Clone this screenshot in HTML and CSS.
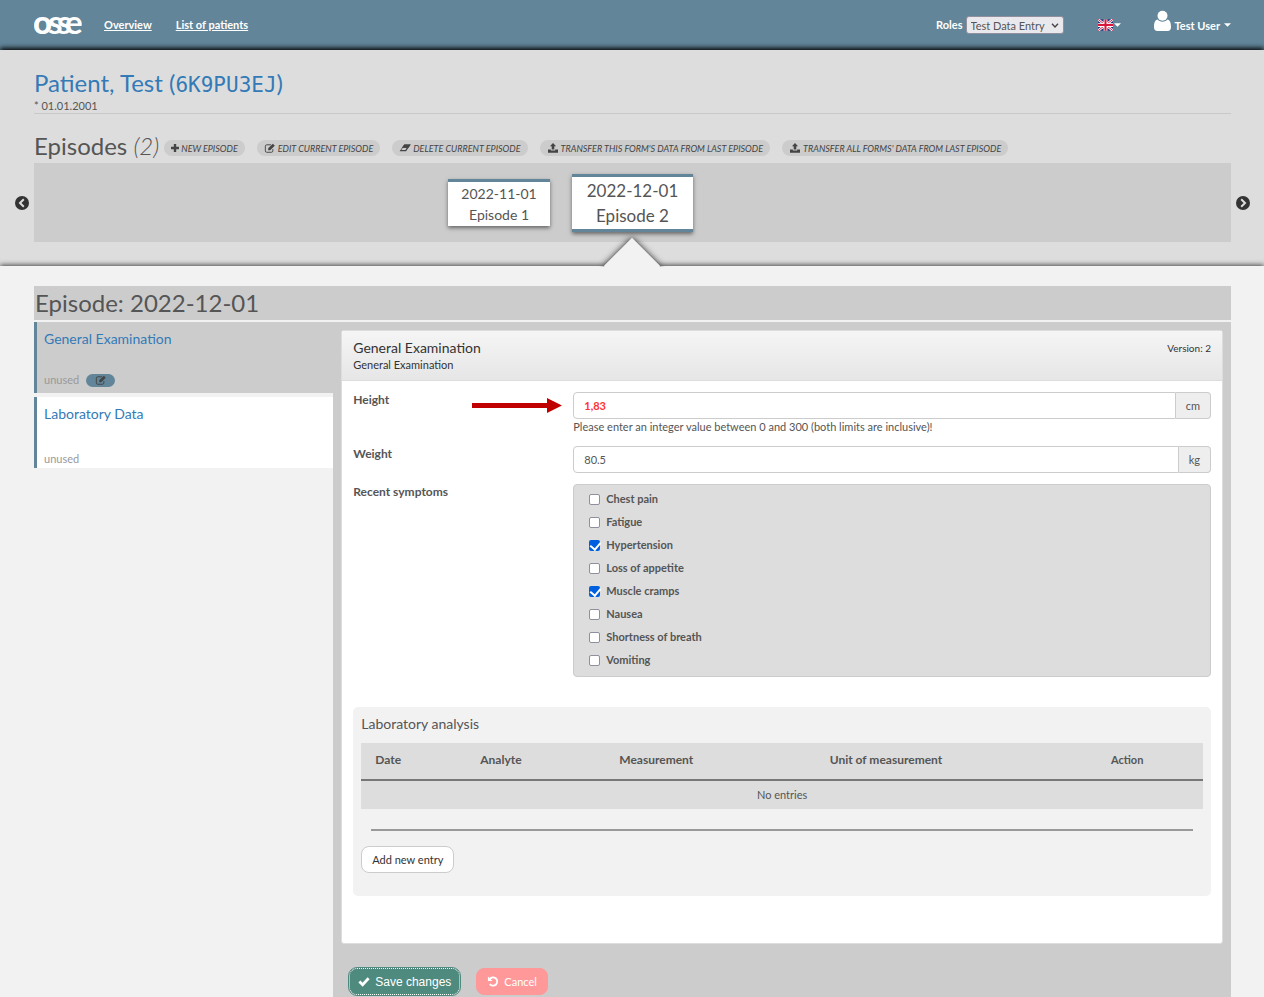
FILE: index.html
```
<!DOCTYPE html>
<html lang="en">
<head>
  <meta charset="UTF-8">
  <meta name="viewport" content="width=device-width, initial-scale=1.0">
  <title>OSSE - General Examination</title>
  <link rel="stylesheet" href="styles.css">
</head>
<body>
  <!-- shared icons -->
  <svg class="sprite" aria-hidden="true">
    <symbol id="icon-edit" viewBox="0 0 16 14">
      <path d="M12 8.500V11a2 2 0 0 1-2 2H3.500a2 2 0 0 1-2-2V4.500a2 2 0 0 1 2-2H9.500" fill="none" stroke="currentColor" stroke-width="1.300"/>
      <path d="M5.500 7.500 12 1l2.700 2.700L8.200 10.200H5.500z" fill="currentColor"/>
    </symbol>
    <symbol id="icon-upload" viewBox="0 0 14 14">
      <path d="M7 0l4.300 4.600H8.800V9H5.200V4.600H2.700zM0 9h4v1.500h6V9h4v4.500H0z" fill="currentColor"/>
    </symbol>
    <symbol id="icon-caret" viewBox="0 0 8 4">
      <path d="M0 0h8L4 4z" fill="currentColor"/>
    </symbol>
  </svg>

  <header class="navbar">
    <svg class="logo" viewBox="0 0 48 48" role="img" aria-label="osse">
      <text y="33" font-size="33"><tspan x="-1" font-weight="900">o</tspan><tspan x="14" font-weight="700">s</tspan><tspan x="23" font-weight="700">s</tspan><tspan x="31">e</tspan></text>
    </svg>
    <nav class="nav-links">
      <a href="#">Overview</a>
      <a href="#">List of patients</a>
    </nav>
    <div class="roles">
      <label for="role">Roles</label>
      <span class="select-wrap">
        <select id="role">
          <option>Test Data Entry</option>
        </select>
        <svg class="chevron" viewBox="0 0 8 5"><path d="M1 .7 4 4 7 .7" fill="none" stroke="#444" stroke-width="1.300"/></svg>
      </span>
    </div>
    <button type="button" class="nav-btn language" aria-label="Language">
      <svg class="flag" viewBox="0 0 16 12">
        <path d="M0 0h16v12H0z" fill="#1c2f7c"/>
        <path d="M0 0l16 12M16 0L0 12" stroke="#fff" stroke-width="2.600"/>
        <path d="M0 0l16 12M16 0L0 12" stroke="#d8173a" stroke-width="1"/>
        <path d="M8 0v12M0 6h16" stroke="#fff" stroke-width="4"/>
        <path d="M8 0v12M0 6h16" stroke="#d8173a" stroke-width="2.200"/>
      </svg>
      <svg class="caret"><use href="#icon-caret"/></svg>
    </button>
    <button type="button" class="nav-btn user">
      <svg class="user-icon" viewBox="0 0 18 22">
        <path d="M3.800 9.500C1.200 9.800 0 13 0 17.500 0 20 1.300 21.500 3.500 21.500h11c2.200 0 3.500-1.500 3.500-4 0-4.500-1.200-7.700-3.800-8C13 11 11.200 11.700 9 11.700S5 11 3.800 9.500z" fill="#fff"/>
        <circle cx="9" cy="5.500" r="5.300" fill="#fff"/>
      </svg>
      <span>Test User</span>
      <svg class="caret"><use href="#icon-caret"/></svg>
    </button>
  </header>

  <section class="patient">
    <div class="patient-info">
      <h1><a href="#">Patient, Test (<span class="patient-id">6K9PU3EJ</span>)</a></h1>
      <p>* 01.01.2001</p>
    </div>
    <div class="episodes-head">
      <h2>Episodes <em>(2)</em></h2>
      <button type="button" class="pill">
        <svg class="icon-sm" viewBox="0 0 10 10"><path d="M3.500 0h3v3.500H10v3H6.500V10h-3V6.500H0v-3h3.500z" fill="currentColor"/></svg>New episode
      </button>
      <button type="button" class="pill"><svg class="icon"><use href="#icon-edit"/></svg>Edit current episode</button>
      <button type="button" class="pill">
        <svg class="icon" viewBox="0 0 16 14"><path d="M7 2h9l-6.500 9.500H.5zM2.800 9.800h5.700l2-3.100H5z" fill="currentColor" fill-rule="evenodd"/><path d="M7 2h9l-3.300 4.800H3.600z" fill="currentColor"/></svg>Delete current episode
      </button>
      <button type="button" class="pill"><svg class="icon"><use href="#icon-upload"/></svg>Transfer this form's data from last episode</button>
      <button type="button" class="pill"><svg class="icon"><use href="#icon-upload"/></svg>Transfer all forms' data from last episode</button>
    </div>
    <div class="timeline-row">
      <button type="button" class="arrow-btn" aria-label="Previous">
        <svg viewBox="0 0 14 14"><circle cx="7" cy="7" r="7" fill="#333"/><path d="M8.800 3.300 5 7l3.800 3.700" fill="none" stroke="#ddd" stroke-width="2"/></svg>
      </button>
      <div class="timeline">
        <a href="#" class="tile">2022-11-01<br>Episode 1</a>
        <a href="#" class="tile active">2022-12-01<br>Episode 2</a>
      </div>
      <button type="button" class="arrow-btn next" aria-label="Next">
        <svg viewBox="0 0 14 14"><circle cx="7" cy="7" r="7" fill="#333"/><path d="M5.200 3.300 9 7l-3.800 3.700" fill="none" stroke="#ddd" stroke-width="2"/></svg>
      </button>
    </div>
  </section>

  <main class="main">
    <div class="pointer"></div>
    <h2 class="episode-title">Episode: 2022-12-01</h2>
    <div class="columns">
      <aside class="forms">
        <div class="form-item current">
          <a href="#">General Examination</a>
          <div class="status">unused <span class="badge"><svg class="icon"><use href="#icon-edit"/></svg></span></div>
        </div>
        <div class="form-item">
          <a href="#">Laboratory Data</a>
          <div class="status">unused</div>
        </div>
      </aside>

      <form class="content">
        <div class="panel">
          <div class="panel-head">
            <div>
              <h3>General Examination</h3>
              <p>General Examination</p>
            </div>
            <span class="version">Version: 2</span>
          </div>
          <div class="panel-body">
            <div class="row">
              <div class="row-label">
                <label for="height">Height</label>
                <svg class="hint-arrow" viewBox="0 0 90 16"><path d="M0 5h75V0l15 7.500L75 15v-5H0z" fill="#c00000"/></svg>
              </div>
              <div>
                <div class="input-group">
                  <input type="text" id="height" class="invalid" value="1,83">
                  <span class="unit">cm</span>
                </div>
                <p class="message">Please enter an integer value between 0 and 300 (both limits are inclusive)!</p>
              </div>
            </div>
            <div class="row">
              <div class="row-label"><label for="weight">Weight</label></div>
              <div class="input-group">
                <input type="text" id="weight" value="80.5">
                <span class="unit">kg</span>
              </div>
            </div>
            <div class="row" role="group" aria-labelledby="symptoms">
              <div class="row-label"><span id="symptoms">Recent symptoms</span></div>
              <div class="checks">
                <label><input type="checkbox">Chest pain</label>
                <label><input type="checkbox">Fatigue</label>
                <label><input type="checkbox" checked>Hypertension</label>
                <label><input type="checkbox">Loss of appetite</label>
                <label><input type="checkbox" checked>Muscle cramps</label>
                <label><input type="checkbox">Nausea</label>
                <label><input type="checkbox">Shortness of breath</label>
                <label><input type="checkbox">Vomiting</label>
              </div>
            </div>

            <div class="lab">
              <h3>Laboratory analysis</h3>
              <table>
                <thead>
                  <tr>
                    <th class="col-date">Date</th>
                    <th class="col-analyte">Analyte</th>
                    <th class="col-measure">Measurement</th>
                    <th class="col-unit">Unit of measurement</th>
                    <th class="col-action">Action</th>
                  </tr>
                </thead>
                <tbody>
                  <tr>
                    <td colspan="5">No entries</td>
                  </tr>
                </tbody>
              </table>
              <hr>
              <button type="button" class="btn btn-add">Add new entry</button>
            </div>
          </div>
        </div>
        <div class="actions">
          <button type="button" class="btn btn-save">
            <svg viewBox="0 0 13 11"><path d="M1.500 5.500 5 9l6.500-7" fill="none" stroke="#fff" stroke-width="3"/></svg>Save changes
          </button>
          <button type="button" class="btn btn-cancel">
            <svg viewBox="0 0 12 12"><path d="M2.200 3.800a4.500 4.500 0 1 1 .3 5" fill="none" stroke="#fff" stroke-width="2"/><path d="M.5.5V5.500h5z" fill="#fff"/></svg>Cancel
          </button>
        </div>
      </form>
    </div>
  </main>
</body>
</html>
```
FILE: styles.css
```
* {
  margin: 0;
  padding: 0;
  box-sizing: border-box;
}
body {
  font-family: Lato, "Liberation Sans", sans-serif;
  font-size: 11px;
  line-height: 20px;
  color: #555;
  background-color: #f2f2f2;
  min-height: 100vh;
  display: flex;
  flex-direction: column;
}
a {
  color: #337ab7;
  text-decoration: none;
}
button {
  font-family: inherit;
  cursor: pointer;
}
h1, h2, h3 {
  font-weight: 400;
}
.sprite {
  display: none;
}

/* top bar */
.navbar {
  display: flex;
  align-items: center;
  height: 50px;
  padding: 0 33px 0 34px;
  background-color: #628599;
  color: white;
  font-weight: 700;
}
.logo {
  width: 48px;
  height: 48px;
  fill: white;
}
.nav-links {
  display: flex;
  gap: 24px;
  margin-left: 22px;
}
.nav-links a {
  color: white;
  text-decoration: underline;
}
.roles {
  display: flex;
  align-items: center;
  gap: 3px;
  margin-left: auto;
}
.select-wrap {
  position: relative;
}
.roles select {
  display: block;
  appearance: none;
  width: 98px;
  height: 18px;
  padding: 0 4px;
  border: 1px solid #8f8f9d;
  border-radius: 3px;
  background-color: #e9e9ed;
  color: #555;
  font-family: inherit;
  font-size: 11px;
}
.chevron {
  position: absolute;
  right: 5px;
  top: 7px;
  width: 8px;
  height: 5px;
}
.nav-btn {
  display: flex;
  align-items: center;
  border: none;
  background: none;
  color: white;
  font-size: 11px;
  font-weight: 700;
}
.caret {
  width: 7px;
  height: 4px;
}
.language {
  margin-left: 34px;
}
.language .caret {
  margin-left: 1px;
}
.flag {
  width: 15px;
  height: 12px;
}
.user {
  gap: 4px;
  margin-left: 33px;
}
.user-icon {
  width: 17px;
  height: 22px;
  margin-bottom: 8px;
}

/* patient and episodes */
.patient {
  position: relative;
  padding: 17px 0 24px;
  background-color: #ddd;
  box-shadow: 0 -2px 5px #000;
}
.patient-info {
  margin: 0 33px 0 34px;
  border-bottom: 1px solid #c8c8c8;
}
.patient-info p {
  line-height: 14px;
}
h1, h2 {
  font-size: 24px;
  line-height: 32px;
}
.patient-id {
  font-family: "DejaVu Sans Mono", monospace;
  font-size: 21px;
  line-height: 20px;
}
.episodes-head {
  display: flex;
  align-items: center;
  gap: 12px;
  margin: 16px 33px 0 34px;
}
.episodes-head h2 {
  margin-right: -7px;
  padding-bottom: 1px;
}
.episodes-head em {
  font-weight: 300;
}
.pill {
  display: flex;
  align-items: center;
  gap: 2px;
  height: 16px;
  margin-top: 3px;
  padding: 0 7px;
  border: none;
  border-radius: 8px;
  background-color: #ccc;
  color: #444;
  font-size: 9px;
  font-style: italic;
  text-transform: uppercase;
}
.icon {
  width: 12px;
  height: 10px;
}
.icon-sm {
  width: 8px;
  height: 8px;
}
.timeline-row {
  display: grid;
  grid-template-columns: 34px 1fr 33px;
  align-items: center;
}
.arrow-btn {
  justify-self: end;
  width: 14px;
  height: 14px;
  margin: 0 5px;
  border: none;
  background: none;
}
.arrow-btn.next {
  justify-self: start;
}
.arrow-btn svg {
  display: block;
}
.timeline {
  display: grid;
  grid-template-columns: 1fr auto 1fr;
  column-gap: 22px;
  align-items: center;
  height: 79px;
  background-color: #ccc;
}
.tile {
  justify-self: end;
  padding: 1px 13px;
  border-top: 3px solid #628599;
  background-color: white;
  box-shadow: 0 2px 4px #666;
  color: #555;
  font-size: 14px;
  line-height: 21px;
  text-align: center;
}
.tile.active {
  padding: 1px 15px;
  border-bottom: 3px solid #628599;
  font-size: 17px;
  line-height: 25px;
}

/* selected episode */
.main {
  position: relative;
  flex: 1;
  display: flex;
  flex-direction: column;
  padding: 20px 33px 0 34px;
  background-color: #f2f2f2;
  box-shadow: 0 -1px 5px #444;
}
.pointer {
  position: absolute;
  left: 50%;
  top: -36px;
  width: 80px;
  height: 37px;
  margin-left: -40px;
  overflow: hidden;
}
.pointer::before {
  content: "";
  display: block;
  width: 40px;
  height: 40px;
  margin: 16px 20px;
  background-color: #f2f2f2;
  box-shadow: 0 0 6px #222;
  transform: rotate(45deg);
}
.episode-title {
  padding: 1px;
  margin-bottom: 2px;
  background-color: #ccc;
}
.columns {
  flex: 1;
  display: grid;
  grid-template-columns: 1fr 3fr;
}
.forms {
  display: flex;
  flex-direction: column;
  gap: 4px;
}
.form-item {
  display: flex;
  flex-direction: column;
  justify-content: space-between;
  height: 71px;
  padding: 7px 10px 0 7px;
  border-left: 3px solid #628599;
  background-color: white;
  font-size: 14px;
}
.form-item.current {
  background-color: #ccc;
}
.status {
  display: flex;
  align-items: center;
  gap: 7px;
  color: #999;
  font-size: 11px;
  line-height: 18px;
}
.current .status {
  margin-bottom: 4px;
}
.badge {
  display: flex;
  align-items: center;
  justify-content: center;
  width: 29px;
  height: 13px;
  border-radius: 7px;
  background-color: #628599;
  color: #444;
}
.content {
  min-width: 0;
  padding: 8px 8px 0;
  background-color: #ccc;
}
.panel {
  border: 1px solid #ddd;
  border-radius: 3px;
  background-color: white;
}
.panel-head {
  display: flex;
  justify-content: space-between;
  padding: 7px 11px 8px;
  border-bottom: 1px solid #ddd;
  background: linear-gradient(#f5f5f5, #e6e6e6);
  color: #333;
}
.panel-head p {
  line-height: 14px;
}
.panel-head h3, .lab h3 {
  font-size: 14px;
  line-height: 20px;
}
.version {
  font-size: 10px;
}
.panel-body {
  padding: 11px 11px 47px;
}
.row {
  display: grid;
  grid-template-columns: 220px 1fr;
  margin-bottom: 11px;
}
.row-label {
  display: flex;
  align-items: flex-start;
  justify-content: space-between;
  padding-right: 11px;
  font-size: 12px;
  font-weight: 700;
  line-height: 16px;
}
.hint-arrow {
  width: 90px;
  height: 16px;
  margin-top: 6px;
}
.input-group {
  display: flex;
  height: 27px;
}
.input-group input {
  flex: 1;
  min-width: 0;
  padding: 0 10px;
  border: 1px solid #ccc;
  border-radius: 4px 0 0 4px;
  color: #555;
  font-family: inherit;
  font-size: 11px;
}
.input-group .invalid {
  color: #f33;
  font-weight: 700;
}
.unit {
  padding: 3px 10px;
  border: 1px solid #ccc;
  border-left: none;
  border-radius: 0 4px 4px 0;
  background-color: #eee;
}
.message {
  line-height: 16px;
}
.checks {
  display: flex;
  flex-direction: column;
  gap: 3px;
  padding: 4px 15px 6px;
  border: 1px solid #ccc;
  border-radius: 4px;
  background-color: #ddd;
}
.checks label {
  display: flex;
  align-items: center;
  gap: 6px;
  font-weight: 700;
}
.checks input {
  appearance: none;
  width: 11px;
  height: 11px;
  border: 1px solid #8f8f9d;
  border-radius: 2px;
  background-color: white;
}
.checks input:checked {
  border: none;
  background: #0060df;
}
.checks input:checked::before {
  content: "";
  display: block;
  width: 5px;
  height: 8px;
  margin: 0 3px;
  border: solid white;
  border-width: 0 2px 2px 0;
  transform: rotate(40deg);
}

/* laboratory analysis */
.lab {
  margin-top: 30px;
  padding: 7px 8px 23px;
  border-radius: 5px;
  background-color: #f2f2f2;
}
table {
  width: 100%;
  margin-top: 9px;
  border-collapse: collapse;
  table-layout: fixed;
  background-color: #ddd;
}
th {
  height: 37px;
  padding: 0 14px 3px;
  border-bottom: 2px solid #777;
  font-size: 12px;
  text-align: left;
}
td {
  height: 29px;
  text-align: center;
}
.col-date {
  width: 105px;
}
.col-analyte {
  width: 139px;
}
.col-measure {
  width: 25%;
}
.col-unit {
  width: 28%;
}
.col-action {
  font-size: 11px;
  text-align: center;
}
hr {
  margin: 20px 10px 15px;
  border: none;
  border-top: 2px solid #999;
}
.btn {
  display: flex;
  align-items: center;
  gap: 5px;
  height: 27px;
  padding: 0 10px;
  border: 1px solid #ccc;
  border-radius: 8px;
  font-size: 11px;
}
.btn svg {
  width: 12px;
  height: 11px;
}
.btn-add {
  background-color: white;
  color: #333;
}
.actions {
  display: flex;
  gap: 16px;
  padding: 24px 8px 0;
}
.btn-save {
  padding: 0 8px;
  border: 1px dotted white;
  outline: 1px solid #4f8a7f;
  background-color: #4f8a7f;
  color: white;
  font-family: "Liberation Sans", sans-serif;
  font-size: 12px;
}
.btn-cancel {
  border-color: #f99;
  background-color: #f99;
  color: white;
}
```
